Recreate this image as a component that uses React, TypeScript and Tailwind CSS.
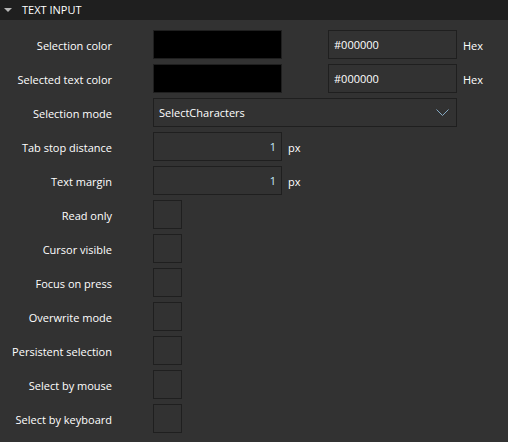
import { useState, type ReactNode } from "react";

const fieldClass =
  "h-[29px] w-full min-w-0 rounded-none border border-[#1f1f1f] bg-[#323232] px-[5px] outline-none";

function Row({ id, label, children }: { id: string; label: string; children: ReactNode }) {
  return (
    <div className="grid grid-cols-[112px_minmax(0,1fr)] items-center gap-x-[41px]">
      <label htmlFor={id} className="whitespace-nowrap pt-0.5 text-right">
        {label}
      </label>
      <div className="grid grid-cols-[minmax(0,1fr)_46px_minmax(0,1fr)_51px] items-center">{children}</div>
    </div>
  );
}

function Unit({ children }: { children: ReactNode }) {
  return <span className="pl-1.5 pt-0.5">{children}</span>;
}

function ColorRow({ id, label }: { id: string; label: string }) {
  const [color, setColor] = useState("#000000");
  return (
    <Row id={id} label={label}>
      <button
        type="button"
        aria-label={label + " swatch"}
        className="h-[29px] w-full border border-[#1f1f1f]"
        style={{ backgroundColor: color }}
      />
      <span />
      <input id={id} type="text" value={color} onChange={(e) => setColor(e.target.value)} className={fieldClass} />
      <Unit>Hex</Unit>
    </Row>
  );
}

function NumberRow({ id, label }: { id: string; label: string }) {
  return (
    <Row id={id} label={label}>
      <input id={id} type="text" inputMode="numeric" defaultValue="1" className={fieldClass + " text-right text-[#c8ecfa]"} />
      <Unit>px</Unit>
    </Row>
  );
}

function CheckRow({ id, label }: { id: string; label: string }) {
  return (
    <Row id={id} label={label}>
      <input
        id={id}
        type="checkbox"
        className="size-[29px] appearance-none border border-[#1f1f1f] bg-[#323232] checked:bg-[#8a8a8a]"
      />
    </Row>
  );
}

const checks = [
  ["read-only", "Read only"],
  ["cursor-visible", "Cursor visible"],
  ["focus-on-press", "Focus on press"],
  ["overwrite-mode", "Overwrite mode"],
  ["persistent-selection", "Persistent selection"],
  ["select-by-mouse", "Select by mouse"],
  ["select-by-keyboard", "Select by keyboard"],
];

export default function App() {
  const [open, setOpen] = useState(true);
  return (
    <section className="min-h-screen bg-[#323232] font-['Open_Sans','Noto_Sans',sans-serif] text-[11px] leading-4 text-white">
      <h2>
        <button
          type="button"
          aria-expanded={open}
          onClick={() => setOpen(!open)}
          className="flex h-5 w-full items-center gap-2.5 bg-[#1f1f1f] pl-1 text-left"
        >
          <svg width="8" height="4" viewBox="0 0 8 4" aria-hidden="true">
            <path d="M0 0H8L4 4Z" fill="#b8b8b8" />
          </svg>
          <span>TEXT INPUT</span>
        </button>
      </h2>
      {open && (
        <form className="flex flex-col gap-[5px] pb-2 pt-2.5">
          <ColorRow id="selection-color" label="Selection color" />
          <ColorRow id="selected-text-color" label="Selected text color" />
          <Row id="selection-mode" label="Selection mode">
            <div className="relative col-span-3">
              <select id="selection-mode" className={fieldClass + " appearance-none"}>
                <option>SelectCharacters</option>
                <option>SelectWords</option>
              </select>
              <svg
                className="pointer-events-none absolute right-2 top-[11px]"
                width="13"
                height="8"
                viewBox="0 0 13 8"
                aria-hidden="true"
              >
                <path d="M0.5 0.5L6.5 6.5L12.5 0.5" fill="none" stroke="#86aac4" />
              </svg>
            </div>
          </Row>
          <NumberRow id="tab-stop-distance" label="Tab stop distance" />
          <NumberRow id="text-margin" label="Text margin" />
          {checks.map(([id, label]) => (
            <CheckRow key={id} id={id} label={label} />
          ))}
        </form>
      )}
    </section>
  );
}
